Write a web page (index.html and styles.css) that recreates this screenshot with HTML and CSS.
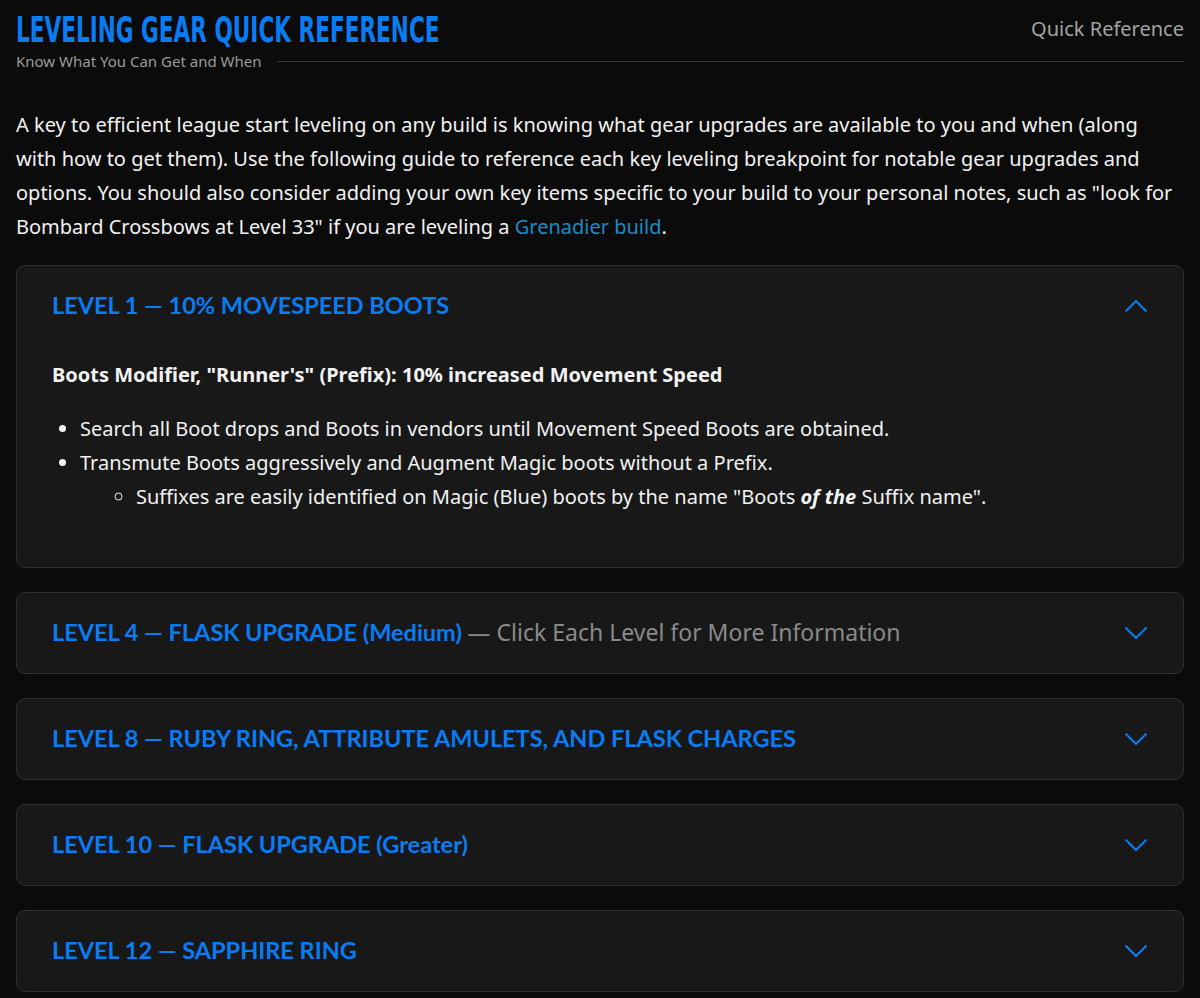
FILE: index.html
```html
<!DOCTYPE html>
<html lang="en">

<head>
    <meta charset="UTF-8">
    <meta name="viewport" content="width=device-width, initial-scale=1.0">
    <title>Leveling Gear Quick Reference</title>
    <link rel="stylesheet" href="styles.css">
</head>

<body>
    <div class="page">
        <header class="page-head">
            <div class="head-top">
                <h1 class="title"><span>Leveling Gear Quick Reference</span></h1>
                <span class="tag">Quick Reference</span>
            </div>
            <div class="head-sub">
                <span class="subtitle">Know What You Can Get and When</span>
                <span class="rule"></span>
            </div>
        </header>

        <p class="intro">
            A key to efficient league start leveling on any build is knowing what gear upgrades are available to you and when (along<br>
            with how to get them). Use the following guide to reference each key leveling breakpoint for notable gear upgrades and<br>
            options. You should also consider adding your own key items specific to your build to your personal notes, such as "look for<br>
            Bombard Crossbows at Level 33" if you are leveling a <a href="#">Grenadier build</a>.
        </p>

        <div class="accordion">
            <section class="item open">
                <button class="item-head">
                    <span class="item-title">Level 1 — 10% Movespeed Boots</span>
                    <svg class="chev" width="24" height="14" viewBox="0 0 24 14"><path d="M1.5 12.5 L12 2 L22.5 12.5" fill="none" stroke="currentColor" stroke-width="2"/></svg>
                </button>
                <div class="item-body">
                    <p class="mod">Boots Modifier, "Runner's" (Prefix): 10% increased Movement Speed</p>
                    <ul>
                        <li>Search all Boot drops and Boots in vendors until Movement Speed Boots are obtained.</li>
                        <li>Transmute Boots aggressively and Augment Magic boots without a Prefix.
                            <ul>
                                <li>Suffixes are easily identified on Magic (Blue) boots by the name "Boots <b><i>of the</i></b> Suffix name".</li>
                            </ul>
                        </li>
                    </ul>
                </div>
            </section>

            <section class="item">
                <button class="item-head">
                    <span class="item-title">Level 4 — Flask Upgrade <span class="nocap">(Medium)</span> <span class="hint">— Click Each Level for More Information</span></span>
                    <svg class="chev" width="24" height="14" viewBox="0 0 24 14"><path d="M1.5 1.5 L12 12 L22.5 1.5" fill="none" stroke="currentColor" stroke-width="2"/></svg>
                </button>
            </section>

            <section class="item">
                <button class="item-head">
                    <span class="item-title">Level 8 — Ruby Ring, Attribute Amulets, and Flask Charges</span>
                    <svg class="chev" width="24" height="14" viewBox="0 0 24 14"><path d="M1.5 1.5 L12 12 L22.5 1.5" fill="none" stroke="currentColor" stroke-width="2"/></svg>
                </button>
            </section>

            <section class="item">
                <button class="item-head">
                    <span class="item-title">Level 10 — Flask Upgrade <span class="nocap">(Greater)</span></span>
                    <svg class="chev" width="24" height="14" viewBox="0 0 24 14"><path d="M1.5 1.5 L12 12 L22.5 1.5" fill="none" stroke="currentColor" stroke-width="2"/></svg>
                </button>
            </section>

            <section class="item">
                <button class="item-head">
                    <span class="item-title">Level 12 — Sapphire Ring</span>
                    <svg class="chev" width="24" height="14" viewBox="0 0 24 14"><path d="M1.5 1.5 L12 12 L22.5 1.5" fill="none" stroke="currentColor" stroke-width="2"/></svg>
                </button>
            </section>
        </div>
    </div>
</body>

</html>
```

FILE: styles.css
```css
body {
    font-family: "Noto Sans", Lato, sans-serif;
    background-color: #0b0b0b;
    color: #f2f2f2;
    margin: 0;
    padding: 0;
}

.page {
    padding: 0 16px 9px;
}

.head-top {
    display: flex;
    justify-content: space-between;
    align-items: flex-start;
    padding-top: 10px;
}

.title {
    margin: 0;
    font-family: "DejaVu Sans Condensed", "DejaVu Sans", sans-serif;
    font-size: 35px;
    line-height: 40px;
    font-weight: 700;
    text-transform: uppercase;
    color: #0a7cf2;
    white-space: nowrap;
}

.title span {
    display: inline-block;
    transform: scaleX(0.686);
    transform-origin: left center;
}

.tag {
    font-size: 20px;
    color: #a3a3a3;
    margin-top: 5px;
}

.head-sub {
    display: flex;
    align-items: center;
    gap: 16px;
}

.subtitle {
    font-size: 15px;
    color: #9b9b9b;
    line-height: 22px;
}

.rule {
    flex: 1;
    height: 1px;
    background-color: #3a3a3a;
}

.intro {
    font-size: 20px;
    line-height: 34px;
    margin: 36px 0 21px;
    white-space: nowrap;
}

.intro a {
    color: #1a8cc4;
    text-decoration: none;
}

.accordion {
    display: flex;
    flex-direction: column;
    gap: 24px;
}

.item {
    background-color: #181818;
    border: 1px solid #2f2f2f;
    border-radius: 9px;
}

.item-head {
    display: flex;
    width: 100%;
    justify-content: space-between;
    align-items: center;
    padding: 24px 35px 25px 35px;
    background: none;
    border: none;
    text-align: left;
    cursor: pointer;
    font-family: Lato, sans-serif;
    color: #0a7cf2;
}

.item-title {
    font-size: 23.5px;
    line-height: 31px;
    font-weight: 700;
    text-transform: uppercase;
}

.nocap {
    text-transform: none;
}

.hint {
    font-family: "Noto Sans", sans-serif;
    font-size: 23px;
    font-weight: 400;
    color: #8a8a8a;
    text-transform: none;
}

.chev {
    display: block;
    color: #0a7cf2;
}

.item-body {
    padding: 12px 35px 53px;
    font-size: 20px;
    line-height: 34px;
}

.mod {
    margin: 0 0 20px;
    font-weight: 700;
}

.item-body ul {
    margin: 0;
    padding-left: 28px;
}

.item-body ul ul {
    padding-left: 56px;
    list-style-type: circle;
}
```
